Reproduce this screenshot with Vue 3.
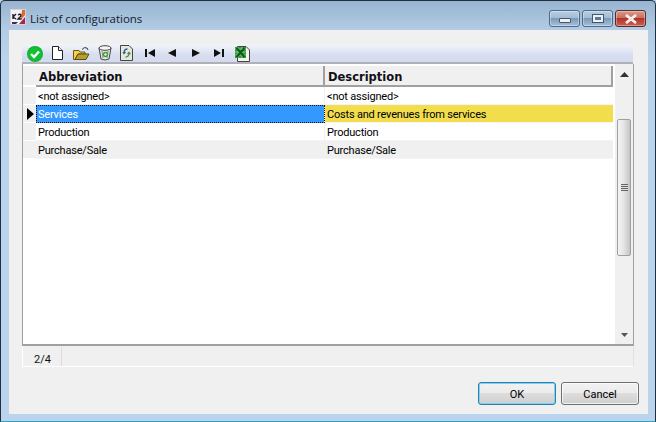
<script setup>
const rows = [
  { a: '<not assigned>', d: '<not assigned>', cls: '' },
  { a: 'Services', d: 'Costs and revenues from services', cls: 'current' },
  { a: 'Production', d: 'Production', cls: '' },
  { a: 'Purchase/Sale', d: 'Purchase/Sale', cls: 'alt' }
]
</script>

<template>
  <div class="window">
    <header class="titlebar">
      <svg class="appicon" width="16" height="16" viewBox="0 0 16 16">
        <rect x="0.5" y="0.5" width="15" height="15" fill="#f4f2f2" stroke="#d8d0d4"/>
        <path d="M9 15 L15 8 V15 Z" fill="#a02a50"/>
        <path d="M12 1 L15 1 L15 6 L11 11 Z" fill="#e0682c"/>
        <path d="M2 13 L8 13 L6 15 L2 15 Z" fill="#3a3060"/>
        <path d="M3 5 V10 M3 8 L6 5 M3 8 L6 10 M8 6 Q11 4 11 7 L8 10 H11.500" fill="none" stroke="#1c1c30" stroke-width="1.400"/>
      </svg>
      <span class="title">List of configurations</span>
      <div class="caption">
        <button class="capbtn"><span class="minglyph"></span></button>
        <button class="capbtn"><span class="maxglyph"></span></button>
        <button class="capbtn close">
          <svg width="16" height="10" viewBox="0 0 16 10"><path d="M3 1 L13 9 M13 1 L3 9" stroke="#fff" stroke-width="2.600" fill="none"/><path d="M3 1 L13 9 M13 1 L3 9" stroke="#f0dcd8" stroke-width="1" fill="none"/></svg>
        </button>
      </div>
    </header>

    <main class="client">
      <div class="toolbar">
        <svg class="tool first" width="18" height="18" viewBox="0 0 18 18">
          <circle cx="9" cy="9" r="8" fill="#14b02c"/>
          <circle cx="9" cy="9" r="7" fill="#10c030"/>
          <path d="M5 9 L8 12 L13 6.500" fill="none" stroke="#fff" stroke-width="2.400"/>
        </svg>
        <svg class="tool" width="12" height="15" viewBox="0 0 12 15">
          <path d="M1.500 0.500 H7.500 L11.500 4.500 V13.500 H1.500 Z" fill="#fff" stroke="#222"/>
          <path d="M7.500 0.500 V4.500 H11.500" fill="#eee" stroke="#222"/>
        </svg>
        <svg class="tool" width="17" height="15" viewBox="0 0 17 15">
          <path d="M0.500 13.500 V4.500 H6 L7 6 H12 V8 H5 L2 13.500 Z" fill="#f4d050" stroke="#6a5a10"/>
          <path d="M2 13.500 L5 8 H16 L13 13.500 Z" fill="#b4a030" stroke="#5a4c10"/>
          <path d="M9 3.500 Q11 0.500 14 2 L15 4" fill="none" stroke="#333"/>
        </svg>
        <svg class="tool" width="14" height="16" viewBox="0 0 14 16">
          <path d="M1 3 L3 14 Q7 16 11 14 L13 3 Z" fill="#e8e8e4" stroke="#444"/>
          <ellipse cx="7" cy="3" rx="6" ry="2.300" fill="#f4f4f0" stroke="#444"/>
          <path d="M4 6 L5 13 M10 6 L9 13" stroke="#888"/>
          <circle cx="7.500" cy="9.500" r="2" fill="none" stroke="#3aa040" stroke-width="1.400"/>
        </svg>
        <svg class="tool" width="13" height="16" viewBox="0 0 13 16">
          <path d="M0.500 0.500 H9 L12.500 4 V15.500 H0.500 Z" fill="#e4e8e0" stroke="#444"/>
          <path d="M7.500 4 Q4 4 4 8 M3 7 L4 8.500 L5.500 7" fill="none" stroke="#3c5c8c" stroke-width="1.300"/>
          <path d="M5.500 12 Q9 12 9 8 M7.500 9 L9 7.500 L10.500 9" fill="none" stroke="#4c9040" stroke-width="1.300"/>
        </svg>
        <svg class="nav nav1" width="11" height="8" viewBox="0 0 11 8"><path d="M0 0 H2 V8 H0 Z M10 0 V8 L3 4 Z" fill="#111"/></svg>
        <svg class="nav nav2" width="8" height="8" viewBox="0 0 8 8"><path d="M8 0 V8 L0 4 Z" fill="#111"/></svg>
        <svg class="nav nav3" width="8" height="8" viewBox="0 0 8 8"><path d="M0 0 V8 L8 4 Z" fill="#111"/></svg>
        <svg class="nav nav4" width="11" height="8" viewBox="0 0 11 8"><path d="M0 0 V8 L7 4 Z M8 0 H10 V8 H8 Z" fill="#111"/></svg>
        <svg class="tool xls" width="16" height="17" viewBox="0 0 16 17">
          <path d="M3.500 1.500 H12 L15.500 5 V16.500 H3.500 Z" fill="#f4f4ec" stroke="#444"/>
          <path d="M1 2 H12 V13 H1 Z" fill="#2e9a3a"/>
          <path d="M1 4 H12 M1 7 H12 M1 10 H12 M4 2 V13 M8 2 V13" stroke="#a8d8a8" stroke-width="0.700"/>
          <path d="M2.500 3 L10.500 12 M10.500 3 L2.500 12" stroke="#0c5a18" stroke-width="2"/>
        </svg>
      </div>

      <div class="gridwrap">
        <div class="grid">
          <div class="gridhead">
            <div class="indicator headind"></div>
            <div class="hcell first">Abbreviation</div>
            <div class="hcell second">Description</div>
          </div>
          <div v-for="r in rows" :key="r.a" class="row" :class="r.cls">
            <div class="indicator">
              <span v-if="r.cls === 'current'" class="pointer"></span>
            </div>
            <div class="cell first">{{ r.a }}</div>
            <div class="cell second">{{ r.d }}</div>
          </div>
        </div>
        <div class="scrollbar">
          <svg class="arrow" width="9" height="5" viewBox="0 0 9 5"><path d="M4.500 0 L9 5 H0 Z" fill="#333"/></svg>
          <div class="spacer top"></div>
          <div class="thumb"><span class="grip"></span></div>
          <div class="spacer bottom"></div>
          <svg class="arrow" width="7" height="4" viewBox="0 0 7 4"><path d="M0 0 H7 L3.500 4 Z" fill="#555"/></svg>
        </div>
      </div>

      <div class="status">
        <div class="pos">2/4</div>
      </div>

      <div class="actions">
        <button class="btn primary">OK</button>
        <button class="btn">Cancel</button>
      </div>
    </main>
  </div>
</template>

<style>
html, body { margin: 0; padding: 0; background: #b9d1ea; }
</style>

<style scoped>
.window {
  width: 656px;
  height: 422px;
  box-sizing: border-box;
  display: flex;
  flex-direction: column;
  padding: 0 7px 7px 8px;
  overflow: hidden;
  border: 1px solid #20303c;
  border-radius: 5px 5px 0 0;
  border-bottom-color: #1fa6c8;
  font-family: Roboto, sans-serif;
  background-image: linear-gradient(180deg, #98b4d0 0, #b4cde6 30px, #bbd3ec 60px);
}
.titlebar {
  height: 29px;
  display: flex;
  align-items: center;
  margin-left: 1px;
  margin-right: -1px;
}
.appicon { margin-right: 4px; margin-top: 3px; }
.title {
  font-family: "Open Sans", sans-serif;
  font-size: 11.5px;
  color: #10202c;
  margin-top: 5px;
}
.caption {
  margin-left: auto;
  display: flex;
  gap: 2px;
  align-self: flex-start;
  margin-top: 9px;
  margin-right: 3px;
}
.capbtn {
  width: 31px;
  height: 17px;
  padding: 0;
  border: 1px solid #4f6a85;
  border-radius: 3px;
  background: linear-gradient(180deg, #b7cde2 0, #a3bcd6 45%, #7c9ab9 50%, #a4c0dc 100%);
  box-shadow: inset 0 0 0 1px rgba(255, 255, 255, 0.35);
  display: flex;
  align-items: center;
  justify-content: center;
}
.capbtn.close {
  border-color: #5c2a2a;
  background: linear-gradient(180deg, #d69a8c 0, #c9705f 45%, #b03428 50%, #c8624e 100%);
}
.minglyph {
  width: 10px;
  height: 3px;
  margin-top: 4px;
  background: #f0f0f0;
  border: 1px solid #44566a;
  border-radius: 1px;
}
.maxglyph {
  width: 6px;
  height: 3px;
  border: 2px solid #eef2f6;
  outline: 1px solid #44566a;
  background: #5a7898;
}
.client {
  flex: 1;
  background: #f0f0f0;
  padding: 14px 14px 0 13px;
  display: flex;
  flex-direction: column;
  min-height: 0;
}
.toolbar {
  height: 20px;
  display: flex;
  align-items: center;
  padding-left: 4px;
  box-sizing: border-box;
  background: linear-gradient(180deg, #f2f4fa 0, #e8ecf6 25%, #d8def0 60%, #d5dbee 100%);
  border-bottom: 2px solid #b0b0b8;
  width: 611px;
}
.tool, .nav { flex: none; }
.tool.first { margin-right: 7px; margin-top: 1px; }
.tool:nth-child(2) { margin-right: 10px; }
.tool:nth-child(3) { margin-right: 8px; }
.tool:nth-child(4) { margin-right: 8px; }
.tool:nth-child(5) { margin-right: 12px; }
.nav1 { margin-right: 12px; }
.nav2 { margin-right: 16px; }
.nav3 { margin-right: 14px; }
.nav4 { margin-right: 9px; }
.gridwrap {
  height: 282px;
  box-sizing: border-box;
  display: flex;
  background: #fff;
  border-left: 1px solid #a0a0a0;
  border-right: 1px solid #a0a0a0;
  border-bottom: 2px solid #a0a0a0;
  width: 612px;
}
.grid {
  flex: none;
  width: 590px;
  padding-top: 2px;
  font-size: 11px;
  letter-spacing: -0.2px;
  color: #000;
}
.gridhead {
  display: flex;
  height: 21px;
}
.indicator {
  width: 13px;
  flex: none;
  box-sizing: border-box;
  background: #f0f0f0;
  border-bottom: 1px solid #fff;
  position: relative;
}
.headind { border-bottom: 2px solid #fff; }
.hcell {
  background: #f0f0f0;
  box-sizing: border-box;
  border-bottom: 2px solid #a0a0a0;
  border-right: 2px solid #a0a0a0;
  font-family: "DejaVu Sans", sans-serif;
  font-weight: 700;
  font-size: 11.5px;
  letter-spacing: 0;
  line-height: 22px;
  height: 21px;
  overflow: hidden;
  padding-left: 3px;
  color: #101018;
}
.hcell.first { width: 289px; }
.hcell.second { width: 288px; }
.row {
  display: flex;
  height: 18px;
  line-height: 18px;
}
.cell {
  box-sizing: border-box;
  padding: 1px 0 0 2px;
  white-space: nowrap;
  overflow: hidden;
  border-bottom: 1px solid #f4f4f4;
}
.cell.first { width: 289px; border-right: 1px solid #f0f0f0; }
.cell.second { width: 288px; }
.row.alt .cell { background: #f0f0f0; }
.row.current .first {
  background: #3399ff;
  color: #fff;
  outline: 1px dotted #111;
  outline-offset: -1px;
  border-bottom: 0;
}
.row.current .second {
  background: #f2de4c;
}
.pointer {
  position: absolute;
  left: 4px;
  top: 3px;
  width: 0;
  height: 0;
  border-left: 7px solid #000;
  border-top: 6px solid transparent;
  border-bottom: 6px solid transparent;
}
.scrollbar {
  width: 18px;
  margin-left: 2px;
  box-sizing: border-box;
  background: #f0f0f0;
  display: flex;
  flex-direction: column;
  align-items: center;
  padding: 8px 0 7px;
}
.spacer.top { height: 42px; flex: none; }
.spacer.bottom { flex: 1; }
.arrow { flex: none; }
.thumb {
  height: 137px;
  width: 14px;
  flex: none;
  box-sizing: border-box;
  border: 1px solid #a0a0a0;
  border-radius: 2px;
  background: linear-gradient(90deg, #f4f4f4 0, #e6e6e6 45%, #c4c4c4 100%);
  display: flex;
  align-items: center;
  justify-content: center;
}
.grip {
  width: 7px;
  height: 7px;
  background: repeating-linear-gradient(180deg, #666 0, #666 1px, #ddd 1px, #ddd 2px);
}
.status {
  margin-top: 1px;
  height: 20px;
  width: 612px;
  box-sizing: border-box;
  display: flex;
  border-bottom: 1px solid #fff;
  border-left: 1px solid #fff;
  border-right: 1px solid #e0e0e0;
}
.pos {
  width: 39px;
  box-sizing: border-box;
  border-right: 1px solid #dcdcdc;
  font-size: 11px;
  padding: 3px 0 0 11px;
  line-height: 20px;
  color: #111;
}
.actions {
  margin-top: 15px;
  display: flex;
  justify-content: flex-end;
  gap: 5px;
  margin-right: -5px;
}
.btn {
  width: 78px;
  height: 23px;
  padding: 1px 0 0;
  font-family: Roboto, sans-serif;
  font-size: 11px;
  color: #000;
  border: 1px solid #707070;
  border-radius: 3px;
  background: linear-gradient(180deg, #f2f2f2 0, #ebebeb 48%, #dddddd 50%, #cfcfcf 100%);
  box-shadow: inset 0 0 0 1px rgba(255, 255, 255, 0.7);
}
.btn.primary {
  border-color: #2c7fb0;
  box-shadow: inset 0 0 0 1px #7cd4f0;
}
</style>
